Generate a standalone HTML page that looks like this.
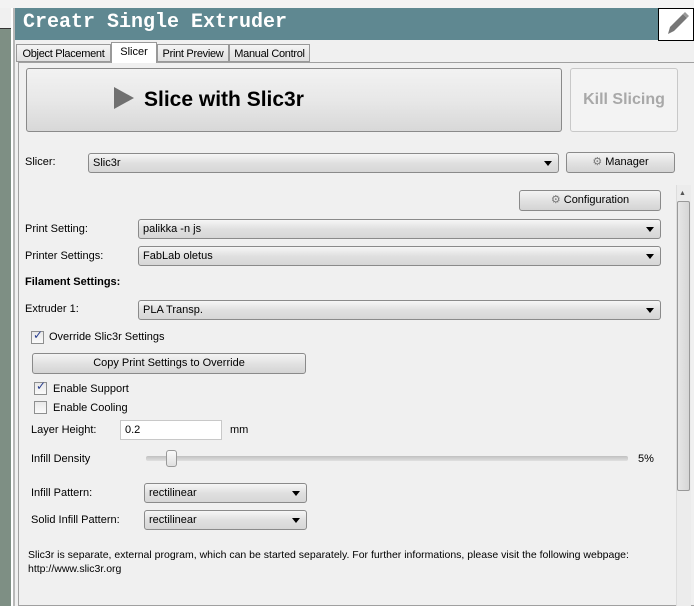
<!DOCTYPE html>
<html><head><style>
*{box-sizing:border-box;margin:0;padding:0}
body{width:694px;height:606px;overflow:hidden;background:#f0f0f0;font-family:"Liberation Sans",sans-serif;font-size:11px;color:#000;position:relative}
.a{position:absolute;white-space:nowrap}
.btn{position:absolute;border:1px solid #8a8a8a;border-radius:3px;background:linear-gradient(#f4f4f4,#e2e2e2 50%,#d4d4d4);text-align:center;font-size:11px;white-space:nowrap}
.dd{position:absolute;border:1px solid #8a8a8a;border-radius:3px;background:linear-gradient(#f6f6f6,#e0e0e0 50%,#d6d6d6);font-size:11px;padding-left:4px;line-height:18px}
.dd:after{content:"";position:absolute;right:6px;top:7px;border-left:4px solid transparent;border-right:4px solid transparent;border-top:5px solid #000}
.lbl{position:absolute;font-size:11px;white-space:nowrap}
.cb{position:absolute;width:13px;height:13px;border:1px solid #8e8f8f;background:linear-gradient(#e8e8e8,#fafafa)}
.tab{position:absolute;top:44px;height:18px;border:1px solid #999;background:linear-gradient(#f4f4f4,#e0e0e0);font-size:11px;padding-top:3px;text-align:center;white-space:nowrap;letter-spacing:-0.3px}
</style></head><body>
<div class="a" style="left:0;top:0;width:694px;height:8px;background:#f3f3f3"></div>
<div class="a" style="left:0;top:28px;width:11px;height:578px;background:#7e8f84;border-top:1px solid #333"></div>
<div class="a" style="left:11px;top:8px;width:2px;height:598px;background:#fff"></div>
<div class="a" style="left:13px;top:8px;width:2px;height:598px;background:#b8b8b8"></div>
<div class="a" style="left:15px;top:8px;width:643px;height:32px;background:#5f8891;color:#fff;font-family:'Liberation Mono',monospace;font-weight:bold;font-size:20px;line-height:30px;padding-left:8px">Creatr Single Extruder</div>
<div class="a" style="left:658px;top:8px;width:36px;height:33px;background:#fff;border:1px solid #000">
<svg width="34" height="31" viewBox="0 0 34 31"><path d="M9 25 L11 18 L24 5 L28 9 L15 22 Z" fill="#777"/><path d="M24 5 L26 3 L30 7 L28 9Z" fill="#999"/></svg></div>
<div class="tab" style="left:16px;width:95px">Object Placement</div>
<div class="a" style="left:111px;top:42px;width:46px;height:21px;border:1px solid #999;border-bottom:none;background:#fff;font-size:11px;padding:3px 0 0 0;text-align:center;z-index:2">Slicer</div>
<div class="tab" style="left:157px;width:72px">Print Preview</div>
<div class="tab" style="left:229px;width:81px">Manual Control</div>
<div class="a" style="left:18px;top:62px;width:676px;height:544px;border:1px solid #a0a0a0;border-right:none;background:#f0f0f0"></div>
<div class="btn" style="left:26px;top:68px;width:536px;height:64px;background:linear-gradient(#f2f2f2,#e8e8e8 50%,#d8d8d8);font-weight:bold;font-size:21px;line-height:62px;text-align:left;padding-left:87px">
<span style="display:inline-block;width:0;height:0;border-top:11px solid transparent;border-bottom:11px solid transparent;border-left:20px solid #707070;vertical-align:-3px;margin-right:10px"></span>Slice with Slic3r</div>
<div class="btn" style="left:570px;top:68px;width:108px;height:64px;background:#f3f3f3;border-color:#c8c8c8;color:#a8a8a8;font-weight:bold;font-size:16px;line-height:62px">Kill Slicing</div>
<div class="lbl" style="left:25px;top:156px">Slicer:</div>
<div class="dd" style="left:88px;top:153px;width:471px;height:20px">Slic3r</div>
<div class="btn" style="left:566px;top:152px;width:109px;height:21px;line-height:19px"><span style="color:#777">⚙</span> Manager</div>
<div class="btn" style="left:519px;top:190px;width:142px;height:21px;line-height:19px"><span style="color:#777">⚙</span> Configuration</div>
<div class="a" style="left:676px;top:185px;width:15px;height:421px;background:#ececec;border-left:1px solid #ddd"></div>
<div class="a" style="left:679px;top:190px;font-size:7px;color:#555">▲</div>
<div class="a" style="left:677px;top:201px;width:13px;height:290px;background:linear-gradient(90deg,#e6e6e6,#d6d6d6);border:1px solid #999;border-radius:2px"></div>
<div class="lbl" style="left:25px;top:223px">Print Setting:</div>
<div class="dd" style="left:138px;top:219px;width:523px;height:20px">palikka -n js</div>
<div class="lbl" style="left:25px;top:250px">Printer Settings:</div>
<div class="dd" style="left:138px;top:246px;width:523px;height:20px">FabLab oletus</div>
<div class="lbl" style="left:25px;top:276px;font-weight:bold">Filament Settings:</div>
<div class="lbl" style="left:25px;top:303px">Extruder 1:</div>
<div class="dd" style="left:138px;top:300px;width:523px;height:20px">PLA Transp.</div>
<div class="cb" style="left:31px;top:331px"></div><div class="a" style="left:33px;top:328px;font-size:12px;color:#2a3f8f">✓</div>
<div class="lbl" style="left:49px;top:331px">Override Slic3r Settings</div>
<div class="btn" style="left:32px;top:353px;width:274px;height:21px;line-height:19px">Copy Print Settings to Override</div>
<div class="cb" style="left:34px;top:382px"></div><div class="a" style="left:36px;top:379px;font-size:12px;color:#2a3f8f">✓</div>
<div class="lbl" style="left:53px;top:383px">Enable Support</div>
<div class="cb" style="left:34px;top:401px"></div>
<div class="lbl" style="left:53px;top:402px">Enable Cooling</div>
<div class="lbl" style="left:31px;top:424px">Layer Height:</div>
<div class="a" style="left:120px;top:420px;width:102px;height:20px;background:#fff;border:1px solid #c8c8c8;padding:3px 0 0 4px;font-size:11px">0.2</div>
<div class="lbl" style="left:230px;top:424px">mm</div>
<div class="lbl" style="left:31px;top:453px">Infill Density</div>
<div class="a" style="left:146px;top:456px;width:482px;height:5px;background:linear-gradient(#c0c0c0,#e0e0e0);border-radius:2px"></div>
<div class="a" style="left:166px;top:450px;width:11px;height:17px;background:linear-gradient(#fafafa,#e0e0e0);border:1px solid #999;border-radius:3px"></div>
<div class="lbl" style="left:638px;top:453px">5%</div>
<div class="lbl" style="left:31px;top:487px">Infill Pattern:</div>
<div class="dd" style="left:144px;top:483px;width:163px;height:20px">rectilinear</div>
<div class="lbl" style="left:31px;top:514px">Solid Infill Pattern:</div>
<div class="dd" style="left:144px;top:510px;width:163px;height:20px">rectilinear</div>
<div class="lbl" style="left:28px;top:548px;font-size:10.5px;line-height:14px;width:640px">Slic3r is separate, external program, which can be started separately. For further informations, please visit the following webpage:<br>http://www.slic3r.org</div>
</body></html>
